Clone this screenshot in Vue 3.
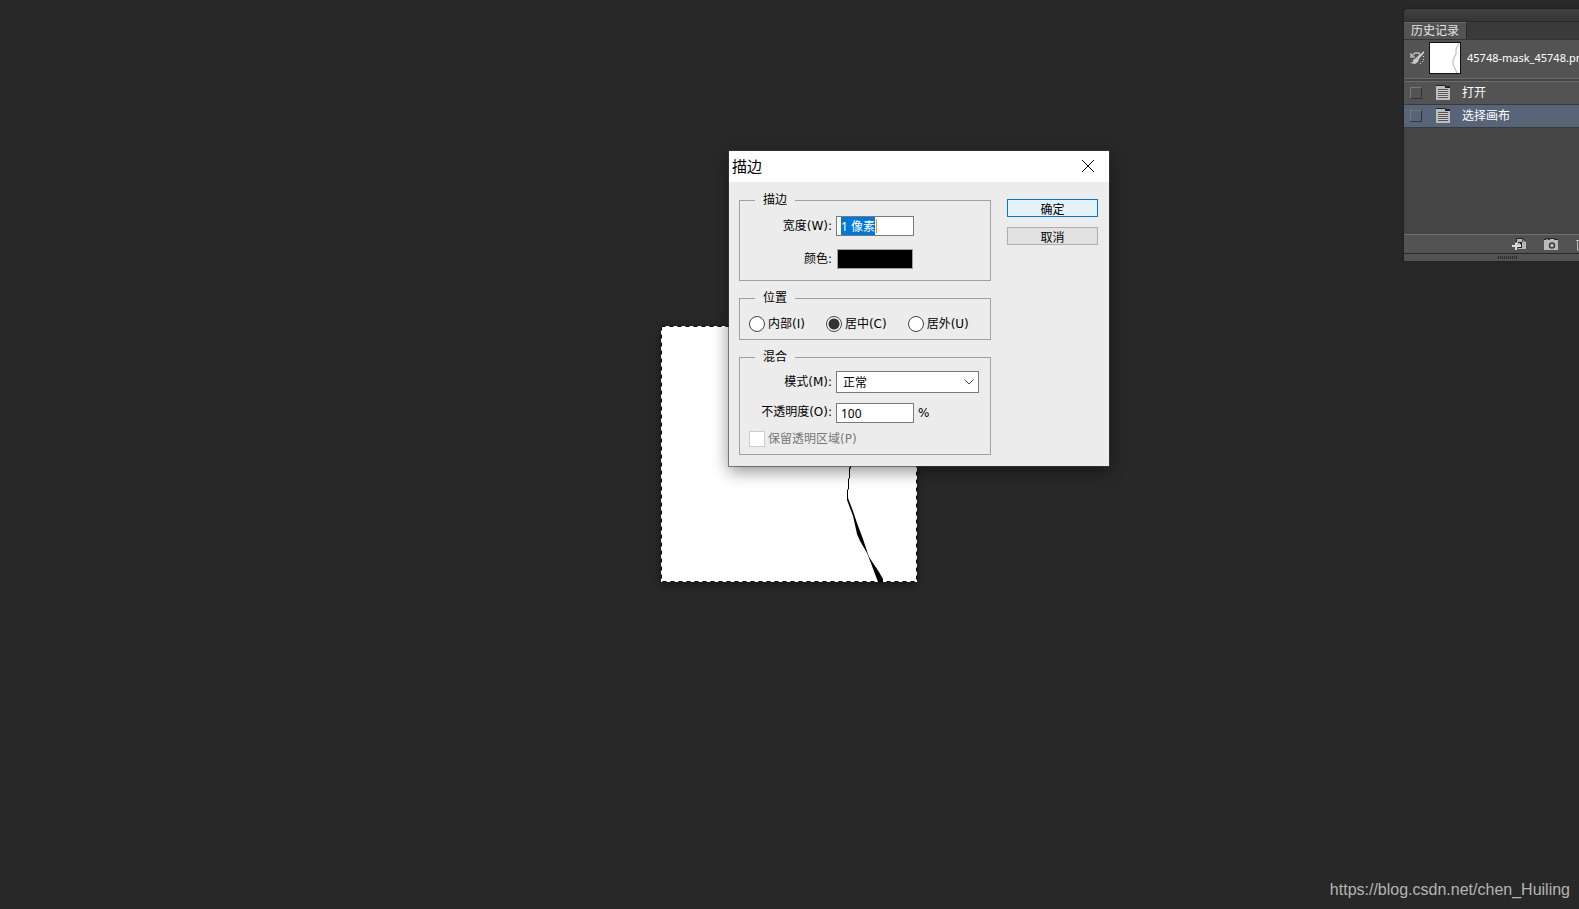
<template>
  <main class="workspace">
    <svg class="canvas" width="256" height="256" viewBox="0 0 256 256" aria-label="mask">
      <rect width="256" height="256" fill="#fff" />
      <path d="M189 120 V141 L188 142 V152 L187 153 V163 L186 164 V174 L189 182 L192 190 L196 208 L199 215 L206 227 L211 240 L217 256 H222 V253 L218 246 L208 231 L202 213 L196 197 L192 185 L187 172 V164 L188 163 V153 L189 152 V143 L190 142 V120 Z" fill="#000" />
      <rect class="ants" x="0.5" y="0.5" width="255" height="255" />
    </svg>

    <aside class="panel">
      <div class="panel-grab"></div>
      <div class="panel-tabs">
        <button class="panel-tab" type="button">历史记录</button>
      </div>

      <div class="snapshot">
        <svg class="brush" width="14" height="14" viewBox="0 0 14 14">
          <path d="M1 2 v4 h4 M2 5 L5 2 L9 2 L10 4" fill="none" stroke="#b8b8b8" stroke-width="1.5" />
          <path d="M14 0 L8 5 L6 7 L3 9 L3 11 L0 12 L5 13 L8 11 L9 8 L14 2 Z" fill="#c8c8c8" />
          <path d="M13 5 h1 v1 h-1 Z M13 8 h1 v1 h-1 Z M12 10 h1 v1 h-1 Z M10 12 h1 v1 h-1 Z" fill="#d8d8d8" />
        </svg>
        <svg class="thumb" width="32" height="32" viewBox="0 0 32 32">
          <rect x="0.5" y="0.5" width="31" height="31" fill="#fff" stroke="#111" />
          <path d="M30 1 L27 7 L27 12 L24 18 L24 22 L28 31" fill="none" stroke="#b0b0b0" />
        </svg>
        <span class="snapshot-name">45748-mask_45748.png</span>
      </div>

      <ul class="history">
        <li
          v-for="state in states"
          :key="state"
          class="history-item"
          :class="{ active: state === current }"
          @click="current = state"
        >
          <span class="history-mark"></span>
          <svg width="14" height="16" viewBox="0 0 14 16">
            <path d="M0 0 h9 l1 1 h4 v2 h-5 v-1 h-9 Z" fill="#222" />
            <path d="M0 1 h9 v2 h5 v12 h-14 Z" fill="#bdbdbd" />
            <path d="M2 4 h10 v9 h-10 Z" fill="#555" />
            <path d="M2 5.5 h10 M2 7.5 h10 M2 9.5 h10 M2 11.5 h10" stroke="#d0d0d0" />
          </svg>
          <span>{{ state }}</span>
        </li>
      </ul>

      <div class="panel-tools">
        <button class="tool" type="button" aria-label="从当前状态创建新文档">
          <svg width="14" height="13" viewBox="0 0 14 13">
            <path d="M4 1 h6 v3 h4 v7 h-8 v-4 h-2 Z" fill="#b5b5b5" />
            <path d="M11 1 l3 3 h-3 Z" fill="#8a8a8a" />
            <path d="M4 0 h7 l3 3 h-1 l-2 -2 h-6 v3 h-1 Z M6 10 v-1 h3 v-3 h-1 v-1 h-2 v-1 h4 v6 Z" fill="#222" />
            <path d="M3 5 h2 v2 h4 v2 h-4 v3 h-2 v-3 h-3 v-2 h3 Z" fill="#ddd" />
          </svg>
        </button>
        <button class="tool" type="button" aria-label="创建新快照">
          <svg width="14" height="13" viewBox="0 0 14 13">
            <path d="M0 2 h2 v-1 h2 v1 h1 l1 -1 h4 l1 1 h3 v10 h-14 Z" fill="#bbb" />
            <path d="M0 1.5 h2 v-1 h2 v1 h1.5 v-1 h5 v1 h3.5" fill="none" stroke="#222" />
            <circle cx="8" cy="7.5" r="2.5" fill="#bbb" stroke="#3c3c3c" stroke-width="1.5" />
          </svg>
        </button>
        <button class="tool" type="button" aria-label="删除当前状态">
          <svg width="14" height="13" viewBox="0 0 14 13">
            <path d="M0 2.5 h12 M1.5 3 v9 h9 v-9 M4.5 4 v7 M7.5 4 v7 M4 0.5 h4" fill="none" stroke="#bbb" />
          </svg>
        </button>
      </div>
      <div class="panel-resize"><span class="grip"></span></div>
    </aside>

    <form class="dialog" role="dialog" aria-labelledby="dialog-title" @submit.prevent>
      <header class="dialog-title">
        <h1 id="dialog-title">描边</h1>
        <button class="close" type="button" aria-label="关闭">
          <svg width="14" height="14" viewBox="0 0 14 14">
            <path d="M1 1 L13 13 M13 1 L1 13" stroke="#000" />
          </svg>
        </button>
      </header>

      <div class="dialog-body">
        <div class="groups">
          <fieldset class="group group-stroke">
            <legend>描边</legend>
            <div class="field">
              <label for="width">宽度(W):</label>
              <input id="width" ref="widthInput" v-model="width" class="text-box width-box" type="text" spellcheck="false">
            </div>
            <div class="field">
              <label for="color">颜色:</label>
              <button id="color" class="swatch" type="button"></button>
            </div>
          </fieldset>

          <fieldset class="group group-position">
            <legend>位置</legend>
            <label v-for="item in positions" :key="item.value" class="choice">
              <input v-model="position" type="radio" name="position" :value="item.value">
              {{ item.label }}
            </label>
          </fieldset>

          <fieldset class="group group-blend">
            <legend>混合</legend>
            <div class="field">
              <label for="mode">模式(M):</label>
              <div class="select-wrap">
                <select id="mode" v-model="mode">
                  <option>正常</option>
                  <option>溶解</option>
                </select>
                <svg class="arrow" width="10" height="6" viewBox="0 0 10 6">
                  <path d="M0.5 0.5 L5 5 L9.5 0.5" fill="none" stroke="#444" />
                </svg>
              </div>
            </div>
            <div class="field">
              <label for="opacity">不透明度(O):</label>
              <div class="with-unit">
                <input id="opacity" v-model="opacity" class="text-box" type="text">
                <span>%</span>
              </div>
            </div>
            <label class="choice disabled">
              <input type="checkbox" disabled>
              保留透明区域(P)
            </label>
          </fieldset>
        </div>

        <div class="actions">
          <button class="action primary" type="submit">确定</button>
          <button class="action" type="button">取消</button>
        </div>
      </div>
    </form>

    <a class="watermark" href="https://blog.csdn.net/chen_Huiling">https://blog.csdn.net/chen_Huiling</a>
  </main>
</template>

<script setup>
import { ref, onMounted } from 'vue';

const states = ['打开', '选择画布'];
const current = ref('选择画布');

const positions = [
  { value: 'inside', label: '内部(I)' },
  { value: 'center', label: '居中(C)' },
  { value: 'outside', label: '居外(U)' },
];

const width = ref('1 像素');
const position = ref('center');
const mode = ref('正常');
const opacity = ref('100');
const widthInput = ref(null);

onMounted(() => {
  widthInput.value.focus();
  widthInput.value.select();
});
</script>

<style>
body {
  margin: 0;
  background: #282828;
}
</style>

<style scoped>
* {
  box-sizing: border-box;
}

.workspace {
  position: relative;
  min-height: 100vh;
  overflow: hidden;
  background: #282828;
  font: 12px/16px "DejaVu Sans", "Noto Sans CJK SC", sans-serif;
  color: #000;
}

button,
input,
select {
  font-family: "Noto Sans", "Noto Sans CJK SC", sans-serif;
  font-size: 12px;
  color: inherit;
  margin: 0;
  padding: 0;
}

/* document */
.canvas {
  position: absolute;
  left: 661px;
  top: 326px;
  box-shadow: 0 3px 8px rgba(0, 0, 0, 0.4);
}

.ants {
  fill: none;
  stroke: #000;
  stroke-dasharray: 4 4;
}

/* history panel, partly past the right edge */
.panel {
  position: absolute;
  top: 9px;
  right: -33px;
  width: 208px;
  background: #454545;
  border-radius: 4px 0 0 0;
  box-shadow: 0 0 2px 1px #222;
  color: #fff;
}

.panel-grab {
  height: 13px;
  border-radius: 4px 0 0 0;
  background: linear-gradient(#404040, #363636);
  border-bottom: 1px solid #2b2b2b;
}

.panel-tabs {
  display: flex;
  height: 18px;
  background: #3a3a3a;
  border-bottom: 1px solid #353535;
}

.panel-tab {
  width: 63px;
  border: 0;
  border-top: 1px solid #666;
  border-right: 1px solid #292929;
  background: #535353;
  color: #e6e6e6;
  line-height: 16px;
}

.snapshot {
  display: flex;
  align-items: center;
  height: 38px;
  padding: 0 6px 2px;
  background: #535353;
}

.thumb {
  margin: 0 6px 0 5px;
}

.snapshot-name {
  font: 11px/16px "Noto Sans", sans-serif;
  white-space: nowrap;
}

.history {
  height: 156px;
  margin: 0;
  padding: 0;
  list-style: none;
  border-top: 4px double #6c6c6c;
}

.history-item {
  display: flex;
  align-items: center;
  height: 23px;
  padding-left: 6px;
  background: #535353;
  border-bottom: 1px solid #3a3a3a;
}

.history-item.active {
  background: #586478;
}

.history-mark {
  width: 12px;
  height: 12px;
  margin-right: 14px;
  border: 1px solid #333;
  border-top-color: #777;
  border-left-color: #777;
}

.history-item svg {
  margin-right: 12px;
}

.panel-tools {
  display: flex;
  gap: 18px;
  height: 19px;
  padding: 3px 0 0 108px;
  background: #535353;
  border-top: 1px solid #707070;
}

.tool {
  display: flex;
  width: 14px;
  height: 13px;
  border: 0;
  background: none;
}

.panel-resize {
  display: flex;
  justify-content: center;
  align-items: center;
  height: 8px;
  border-top: 1px solid #292929;
  background: #535353;
}

.grip {
  width: 20px;
  height: 3px;
  background: repeating-linear-gradient(90deg, #2b2b2b 0 1px, #535353 1px 2px);
}

/* stroke dialog */
.dialog {
  position: absolute;
  left: 729px;
  top: 151px;
  width: 380px;
  background: #ececec;
  box-shadow: 0 0 0 1px rgba(60, 60, 60, 0.6), 0 5px 16px rgba(0, 0, 0, 0.45);
}

.dialog-title {
  display: flex;
  justify-content: space-between;
  align-items: center;
  height: 31px;
  padding: 0 14px 2px 3px;
  background: #fff;
}

.dialog-title h1 {
  margin: 0;
  font: 15px/20px "Noto Sans CJK SC", sans-serif;
}

.close {
  display: flex;
  border: 0;
  background: none;
}

.dialog-body {
  display: flex;
  justify-content: space-between;
  gap: 16px;
  padding: 11px 11px 11px 10px;
}

.groups {
  flex: 1;
  display: flex;
  flex-direction: column;
  gap: 10px;
}

.group {
  min-width: 0;
  margin: 0;
  padding: 0 9px 7px;
  border: 1px solid #a0a0a0;
}

.group legend {
  height: 14px;
  margin-left: 6px;
  padding: 0 8px;
  line-height: 14px;
}

.group-stroke {
  padding: 9px 0 11px;
}

.group-stroke legend {
  margin-left: 15px;
}

.group-stroke .field + .field {
  margin-top: 13px;
}

.group-position {
  display: flex;
  gap: 21px;
  padding-top: 11px;
}

.group-blend {
  padding-top: 7px;
}

.group-blend .field {
  margin: 0 0 10px -9px;
}

.group-blend .with-unit {
  margin-bottom: -2px;
}

.field {
  display: grid;
  grid-template-columns: 92px 1fr;
  column-gap: 4px;
  align-items: center;
}

.field > label {
  text-align: right;
  white-space: nowrap;
}

.text-box {
  width: 78px;
  height: 20px;
  padding: 0 4px;
  border: 1px solid #7a7a7a;
  background: #fff;
  outline: 0;
}

.width-box::selection {
  background: #0078d7;
  color: #fff;
}

.width-box:focus {
  background: linear-gradient(#ff8c1a, #ff8c1a) 39px 2px / 1px 14px no-repeat #fff;
}

.swatch {
  width: 76px;
  height: 20px;
  margin-left: 1px;
  border: 1px solid #a0a0a0;
  background: #000;
}

.choice {
  display: flex;
  align-items: center;
  gap: 3px;
  height: 16px;
  white-space: nowrap;
}

.choice input {
  appearance: none;
  flex: none;
  width: 16px;
  height: 16px;
  border: 1px solid #444;
  background: #fff;
}

.choice input[type="radio"] {
  border-radius: 50%;
}

.choice input[type="radio"]:checked {
  background: radial-gradient(circle, #333 0 5px, #fff 6px);
}

.choice.disabled {
  color: #777;
}

.choice.disabled input {
  border-color: #ccc;
}

.select-wrap {
  position: relative;
  display: flex;
  width: 143px;
}

select {
  appearance: none;
  width: 100%;
  height: 22px;
  padding: 1px 20px 0 6px;
  border: 1px solid #7a7a7a;
  border-radius: 0;
  background: #fff;
}

.arrow {
  position: absolute;
  top: 8px;
  right: 5px;
  pointer-events: none;
}

.with-unit {
  display: flex;
  align-items: center;
  gap: 4px;
}

.actions {
  display: flex;
  flex-direction: column;
  gap: 10px;
  width: 91px;
  padding-top: 6px;
}

.action {
  height: 18px;
  padding-top: 3px;
  border: 1px solid #adadad;
  background: #e1e1e1;
  line-height: 14px;
}

.action.primary {
  border-color: #0078d7;
  background: #e5f1fb;
}

.watermark {
  position: absolute;
  right: 9px;
  bottom: 9px;
  color: #b5b5b5;
  font: 16px/20px "Liberation Sans", Arial, sans-serif;
  text-decoration: none;
}
</style>
